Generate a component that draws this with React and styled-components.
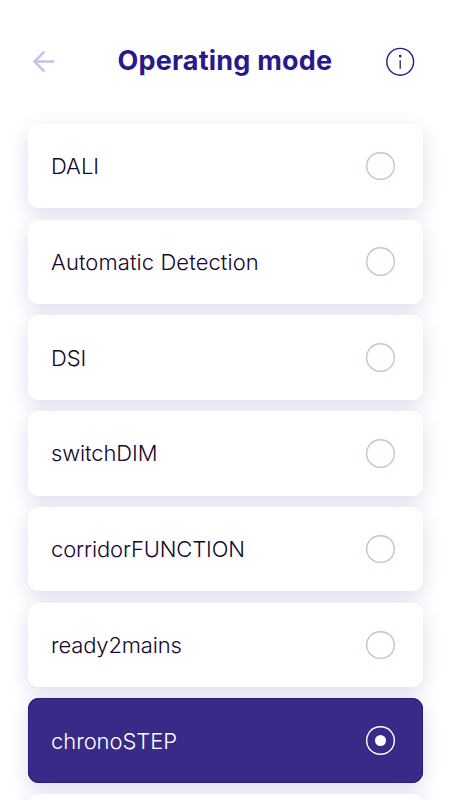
import styled, { createGlobalStyle } from 'styled-components';

const GlobalStyle = createGlobalStyle`
  * {
    box-sizing: border-box;
  }
  body {
    margin: 0;
    background: #fff;
    font-family: Inter, 'Liberation Sans', sans-serif;
  }
`;

const Screen = styled.main`
  height: 800px;
  padding: 0 28.4px 0 28.2px;
  overflow: hidden;
`;

const Header = styled.header`
  height: 123.8px;
  padding: 46px 8px 0 4px;
  display: flex;
  align-items: flex-start;
  justify-content: space-between;
`;

const IconButton = styled.button`
  width: 30px;
  height: 30px;
  padding: 0;
  border: 0;
  background: none;
  svg {
    display: block;
  }
`;

const Title = styled.h1`
  margin: 0 0 0 3px;
  font-size: 27px;
  line-height: 29px;
  font-weight: 700;
  letter-spacing: 0.2px;
  color: #29198a;
  white-space: nowrap;
`;

const List = styled.div`
  position: relative;
  z-index: 0;
  display: flex;
  flex-direction: column;
  gap: 11.4px;
`;

const Option = styled.button`
  position: relative;
  flex: none;
  height: 84.4px;
  padding: 0 28px 0 22.8px;
  display: flex;
  align-items: center;
  justify-content: space-between;
  border: 0;
  border-radius: 11px;
  background: ${({ $active }) => ($active ? '#382a86' : '#fff')};
  box-shadow: ${({ $active }) => ($active ? 'inset 0 0 0 1px #2a1b80' : 'none')};
  color: ${({ $active }) => ($active ? '#fff' : '#14062e')};
  font-family: inherit;
  font-size: 22px;
  font-weight: 360;
  text-align: left;

  /* the shadow stays behind the neighbouring cards */
  &::before {
    content: '';
    position: absolute;
    inset: 0;
    z-index: -1;
    border-radius: 11px;
    box-shadow: 0 6px 20px rgba(56, 38, 145, 0.16);
  }
`;

const Label = styled.span`
  letter-spacing: ${({ $spacing }) => $spacing}px;
`;

const Radio = styled.span`
  width: 28.6px;
  height: 28.6px;
  display: flex;
  align-items: center;
  justify-content: center;
  border-radius: 50%;
  box-shadow: inset 0 0 0 1.4px ${({ $active }) => ($active ? '#fff' : '#c7c0e2')};
`;

const Dot = styled.span`
  width: 11.5px;
  height: 11.5px;
  border-radius: 50%;
  background: #fff;
`;

const modes = [
  { name: 'DALI', spacing: -0.05 },
  { name: 'Automatic Detection', spacing: 0.08 },
  { name: 'DSI', spacing: -0.05 },
  { name: 'switchDIM', spacing: -0.12 },
  { name: 'corridorFUNCTION', spacing: -0.15 },
  { name: 'ready2mains', spacing: -0.15 },
  { name: 'chronoSTEP', spacing: -0.05, active: true },
  { name: '', spacing: 0 },
];

function BackIcon() {
  return (
    <svg width="30" height="30" viewBox="0 0 30 30" fill="none" stroke="#c9c1e5" strokeWidth="2.5">
      <path d="M12.4 5.7 2.5 15.6l9.9 9.9M2.5 15.6h19.7" />
    </svg>
  );
}

function InfoIcon() {
  return (
    <svg width="30" height="30" viewBox="0 0 30 30" fill="none" stroke="#29198a">
      <circle cx="15.2" cy="15.8" r="13.4" strokeWidth="1.4" />
      <path d="M15.2 14.3v8.5" strokeWidth="1.3" />
      <circle cx="15.2" cy="10.1" r="1.4" fill="#29198a" stroke="none" />
    </svg>
  );
}

function App() {
  return (
    <>
      <GlobalStyle />
      <Screen>
        <Header>
          <IconButton aria-label="Back">
            <BackIcon />
          </IconButton>
          <Title>Operating mode</Title>
          <IconButton aria-label="Info">
            <InfoIcon />
          </IconButton>
        </Header>
        <List>
          {modes.map(({ name, spacing, active }) => (
            <Option key={name} $active={active}>
              <Label $spacing={spacing}>{name}</Label>
              {name && <Radio $active={active}>{active && <Dot />}</Radio>}
            </Option>
          ))}
        </List>
      </Screen>
    </>
  );
}

export default App;
